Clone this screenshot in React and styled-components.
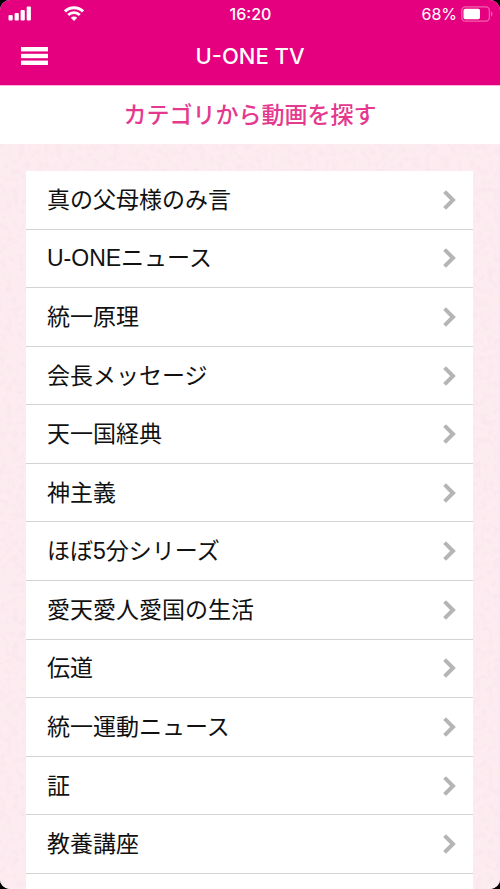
import styled, { createGlobalStyle } from "styled-components";

const GlobalStyle = createGlobalStyle`
  * {
    box-sizing: border-box;
  }

  body {
    margin: 0;
    background: #000;
    font-family: "Liberation Sans", "Noto Sans CJK JP", sans-serif;
  }
`;

const Screen = styled.div`
  display: flex;
  flex-direction: column;
  height: 100vh;
  border-radius: 10px;
  overflow: hidden;
  background: #fff;
`;

const Header = styled.header`
  flex: none;
  background: #e5007f;
  border-bottom: 1px solid #fbb4da;
  color: #fff;
  font-family: Inter, sans-serif;
`;

const StatusBar = styled.div`
  display: grid;
  grid-template-columns: 1fr auto 1fr;
  align-items: center;
  height: 27px;
  padding: 0 7px 0 8px;
  font-size: 16px;
`;

const StatusGroup = styled.div`
  display: flex;
  align-items: center;
  justify-content: ${({ $end }) => ($end ? "flex-end" : "flex-start")};
  gap: ${({ $end }) => ($end ? "4px" : "32px")};
`;

const Clock = styled.time`
  font-weight: 500;
`;

const NavBar = styled.div`
  display: grid;
  grid-template-columns: 48px 1fr 48px;
  align-items: center;
  height: 58px;
`;

const MenuButton = styled.button`
  display: flex;
  justify-content: flex-end;
  padding: 0;
  border: none;
  background: none;
  cursor: pointer;
`;

const AppTitle = styled.h1`
  margin: 0;
  font-size: 22px;
  font-weight: 500;
  line-height: 28px;
  text-align: center;
`;

const SectionTitle = styled.h2`
  flex: none;
  margin: 0;
  color: #e4398f;
  font-size: 23px;
  font-weight: 500;
  line-height: 58px;
  text-align: center;
`;

const Main = styled.main`
  position: relative;
  flex: 1;
  min-height: 0;
  display: flex;
  padding: 27px 27px 0 26px;
  overflow: hidden;
  background: #fcecf0;
`;

/* Papel rosado detrás de la lista */
const PaperTexture = styled.svg`
  position: absolute;
  inset: 0;
  width: 100%;
  height: 100%;
`;

/* Las doce categorías se reparten el alto disponible */
const List = styled.ul`
  position: relative;
  flex: 1;
  display: grid;
  grid-template-rows: repeat(12, minmax(44px, 1fr)) 15px;
  margin: 0;
  padding: 0;
  list-style: none;
  background: #fff;
`;

const Item = styled.li`
  display: flex;
  border-bottom: 1px solid #d3d3d3;
`;

const ItemLink = styled.a`
  flex: 1;
  display: flex;
  align-items: center;
  justify-content: space-between;
  padding: 0 16px 0 21px;
  color: #111;
  font-size: 23px;
  line-height: 34px;
  text-decoration: none;
`;

const categories = [
  "真の父母様のみ言",
  "U-ONEニュース",
  "統一原理",
  "会長メッセージ",
  "天一国経典",
  "神主義",
  "ほぼ5分シリーズ",
  "愛天愛人愛国の生活",
  "伝道",
  "統一運動ニュース",
  "証",
  "教養講座",
];

const SignalIcon = () => (
  <svg width="24" height="15" viewBox="0 0 24 15" fill="#fff" aria-hidden="true">
    <rect x="0.5" y="9" width="4.2" height="5.5" rx="1" />
    <rect x="6.6" y="7" width="4.2" height="7.5" rx="1" />
    <rect x="12.6" y="4" width="4.2" height="10.5" rx="1" />
    <rect x="18.7" y="0.5" width="4.2" height="14" rx="1" />
  </svg>
);

const WifiIcon = () => (
  <svg width="20" height="15" viewBox="0 0 20 15" fill="none" stroke="#fff" aria-hidden="true">
    <path d="M1 5.4a12.8 12.8 0 0 1 18 0" strokeWidth="3" />
    <path d="M4.2 9a8.2 8.2 0 0 1 11.6 0" strokeWidth="2.8" />
    <path d="M10 15 6.8 11.8a4.6 4.6 0 0 1 6.4 0z" fill="#fff" stroke="none" />
  </svg>
);

const BatteryIcon = () => (
  <svg width="32" height="16" viewBox="0 0 32 16" aria-hidden="true">
    <rect x="0.8" y="0.8" width="27.6" height="14.4" rx="3.6" fill="none" stroke="#f260ad" strokeWidth="1.3" />
    <rect x="2.5" y="2.7" width="16.5" height="10.6" rx="1.8" fill="#fff" />
    <path d="M30 5.5c2 .6 2 4.4 0 5z" fill="#f260ad" />
  </svg>
);

const MenuIcon = () => (
  <svg width="27" height="18" viewBox="0 0 27 18" fill="#fff" aria-hidden="true">
    <rect width="27" height="4.4" />
    <rect y="6.8" width="27" height="4.4" />
    <rect y="13.6" width="27" height="4.4" />
  </svg>
);

const ChevronIcon = () => (
  <svg width="14" height="20" viewBox="0 0 14 20" fill="none" aria-hidden="true">
    <path d="M1.6 1.6 10 10l-8.4 8.4" stroke="#b5b5b5" strokeWidth="4" />
  </svg>
);

const App = () => {
  return (
    <>
      <GlobalStyle />
      <Screen>
        <Header>
          <StatusBar>
            <StatusGroup>
              <SignalIcon />
              <WifiIcon />
            </StatusGroup>
            <Clock>16:20</Clock>
            <StatusGroup $end>
              <span>68%</span>
              <BatteryIcon />
            </StatusGroup>
          </StatusBar>
          <NavBar>
            <MenuButton type="button" aria-label="メニュー">
              <MenuIcon />
            </MenuButton>
            <AppTitle>U-ONE TV</AppTitle>
          </NavBar>
        </Header>
        <SectionTitle>カテゴリから動画を探す</SectionTitle>
        <Main>
          <PaperTexture aria-hidden="true">
            <filter id="paper" x="0" y="0" width="100%" height="100%">
              <feTurbulence type="fractalNoise" baseFrequency="0.16" numOctaves="3" seed="4" />
              <feColorMatrix values="0 0 0 0 0.95  0 0 0 0 0.76  0 0 0 0 0.84  1.5 0 0 0 -0.6" />
            </filter>
            <rect width="100%" height="100%" filter="url(#paper)" />
          </PaperTexture>
          <List>
            {categories.map((name) => (
              <Item key={name}>
                <ItemLink href="#">
                  {name}
                  <ChevronIcon />
                </ItemLink>
              </Item>
            ))}
          </List>
        </Main>
      </Screen>
    </>
  );
};

export default App;
